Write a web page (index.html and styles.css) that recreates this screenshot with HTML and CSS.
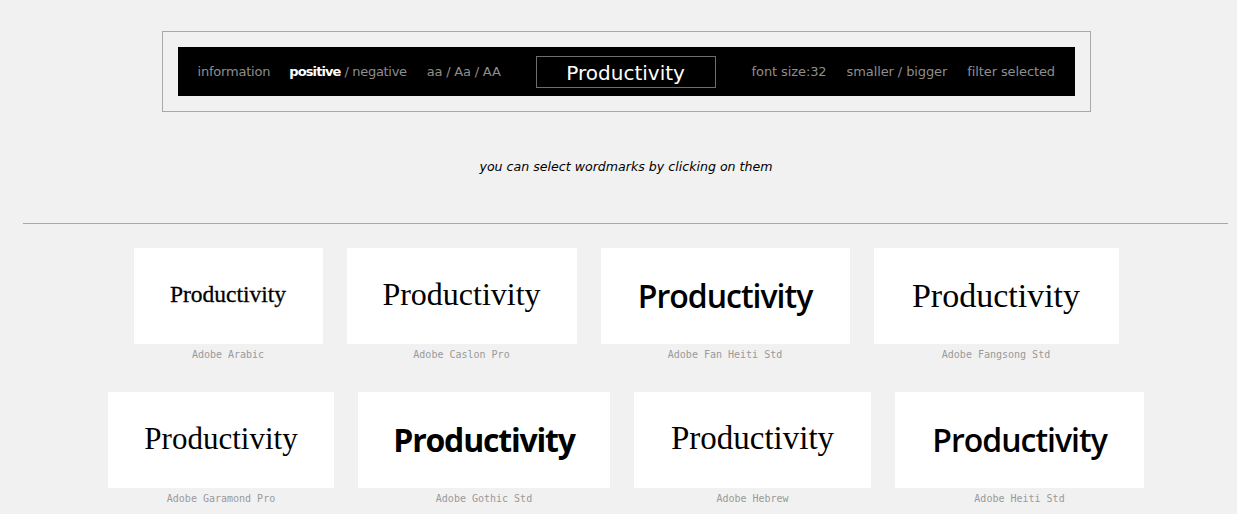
FILE: index.html
```html
<!DOCTYPE html>
<html>
<head>
<meta charset="utf-8">
<title>Wordmarks</title>
<link rel="stylesheet" href="styles.css">
</head>
<body>
<div class="page">
  <div class="toolbar-frame">
    <div class="toolbar">
      <span class="tb-item">information</span>
      <span class="tb-item"><span class="active">positive</span> / negative</span>
      <span class="tb-item">aa / Aa / AA</span>
      <div class="word-box">Productivity</div>
      <span class="tb-item tb-right">font size:32</span>
      <span class="tb-item tb-right">smaller / bigger</span>
      <span class="tb-item tb-right">filter selected</span>
    </div>
  </div>

  <p class="hint">you can select wordmarks by clicking on them</p>

  <hr class="divider">

  <div class="grid">
    <div class="row">
      <div class="item">
        <div class="card w-arabic"><span class="mark f-arabic">Productivity</span></div>
        <div class="label">Adobe Arabic</div>
      </div>
      <div class="item">
        <div class="card w-caslon"><span class="mark f-caslon">Productivity</span></div>
        <div class="label">Adobe Caslon Pro</div>
      </div>
      <div class="item">
        <div class="card w-fanheiti"><span class="mark f-fanheiti">Productivity</span></div>
        <div class="label">Adobe Fan Heiti Std</div>
      </div>
      <div class="item">
        <div class="card w-fangsong"><span class="mark f-fangsong">Productivity</span></div>
        <div class="label">Adobe Fangsong Std</div>
      </div>
    </div>
    <div class="row">
      <div class="item">
        <div class="card w-garamond"><span class="mark f-garamond">Productivity</span></div>
        <div class="label">Adobe Garamond Pro</div>
      </div>
      <div class="item">
        <div class="card w-gothic"><span class="mark f-gothic">Productivity</span></div>
        <div class="label">Adobe Gothic Std</div>
      </div>
      <div class="item">
        <div class="card w-hebrew"><span class="mark f-hebrew">Productivity</span></div>
        <div class="label">Adobe Hebrew</div>
      </div>
      <div class="item">
        <div class="card w-heiti"><span class="mark f-heiti">Productivity</span></div>
        <div class="label">Adobe Heiti Std</div>
      </div>
    </div>
  </div>
</div>
</body>
</html>
```

FILE: styles.css
```css
html, body {
  margin: 0;
  padding: 0;
  background: #f1f1f1;
}

body {
  font-family: "DejaVu Sans", "Liberation Sans", sans-serif;
  color: #000;
  overflow: hidden;
}

.page {
  padding: 31px 0 0 15px;
}

.toolbar-frame {
  width: 929px;
  box-sizing: border-box;
  margin: 0 auto;
  padding: 15px;
  border: 1px solid #a8a8a8;
}

.toolbar {
  background: #000;
  height: 49px;
  display: flex;
  align-items: center;
  padding: 0 20px;
  gap: 20px;
  font-size: 13px;
  color: #8e8e8e;
  white-space: nowrap;
  overflow: hidden;
}

.tb-item {
  line-height: 16px;
  letter-spacing: -0.2px;
  flex-shrink: 0;
}

.tb-item:nth-child(2) {
  margin-left: -1px;
  letter-spacing: -0.3px;
}

.tb-right {
  letter-spacing: -0.1px;
}

.active {
  color: #fff;
  font-weight: bold;
  letter-spacing: -0.9px;
}

.word-box {
  flex-shrink: 0;
  width: 180px;
  height: 32px;
  box-sizing: border-box;
  border: 1px solid #6e6e6e;
  margin: 0 16px 0 15px;
  display: flex;
  align-items: center;
  justify-content: center;
  color: #fff;
  font-size: 20px;
  padding-top: 3px;
}

.hint {
  margin: 47px 0 0 0;
  text-align: center;
  font-style: italic;
  font-size: 12.6px;
  line-height: 16px;
}

.divider {
  margin: 48px 9px 0 8px;
  border: 0;
  border-top: 1px solid #a8a8a8;
  height: 0;
}

.grid {
  margin-top: 24px;
}

.row {
  display: flex;
  justify-content: center;
  gap: 24px;
  margin-bottom: 28px;
}

.item {
  display: flex;
  flex-direction: column;
  align-items: center;
}

.card {
  height: 96px;
  background: #fff;
  display: flex;
  align-items: center;
  justify-content: center;
  white-space: nowrap;
  color: #000;
}

.label {
  font-family: "DejaVu Sans Mono", "Liberation Mono", monospace;
  font-size: 10px;
  line-height: 20px;
  margin-top: 1px;
  margin-bottom: -1px;
  color: #999;
}

.mark {
  line-height: 1;
}

.w-arabic { width: 189px; }
.w-caslon { width: 230px; }
.w-fanheiti { width: 249px; }
.w-fangsong { width: 245px; }
.w-garamond { width: 226px; }
.w-gothic { width: 252px; }
.w-hebrew { width: 237px; }
.w-heiti { width: 249px; }

.f-arabic {
  font-family: "Liberation Serif", serif;
  font-size: 23.5px;
  -webkit-text-stroke: 0.3px #000;
  margin-top: -2px;
}

.f-caslon {
  font-family: "Liberation Serif", serif;
  font-size: 32px;
  margin-top: -4px;
}

.f-fanheiti {
  font-family: "Open Sans", sans-serif;
  font-weight: 600;
  font-size: 32px;
  letter-spacing: -1px;
}

.f-fangsong {
  font-family: "Liberation Serif", serif;
  font-size: 34px;
}

.f-garamond {
  font-family: "Liberation Serif", serif;
  font-size: 31px;
  margin-top: -4px;
}

.f-gothic {
  font-family: "Open Sans", sans-serif;
  font-weight: 700;
  font-size: 32px;
  letter-spacing: -1.2px;
}

.f-hebrew {
  font-family: "Liberation Serif", serif;
  font-size: 33px;
  margin-top: -4px;
}

.f-heiti {
  font-family: "Open Sans", sans-serif;
  font-weight: 600;
  font-size: 32px;
  letter-spacing: -1px;
}
```
